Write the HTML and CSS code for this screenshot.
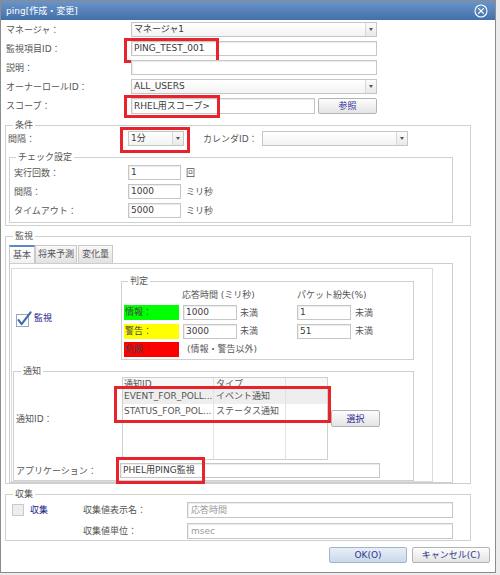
FILE: index.html
```html
<!DOCTYPE html>
<html lang="ja">
<head>
<meta charset="utf-8">
<title>ping[作成・変更]</title>
<link rel="stylesheet" href="styles.css">
</head>
<body>
<div class="dialog">
  <div class="titlebar">
    <span class="title">ping[作成・変更]</span>
    <svg class="close" width="14" height="14" viewBox="0 0 14 14"><circle cx="7" cy="7" r="6" fill="none" stroke="#fff" stroke-width="1.1"/><path d="M4.6 4.6l4.8 4.8M9.4 4.6l-4.8 4.8" stroke="#fff" stroke-width="1.3" stroke-linecap="round"/></svg>
  </div>
  <div class="content">
    <div class="row"><span class="lbl w125">マネージャ：</span><div class="select w246"><span class="val">マネージャ1</span><span class="arr"></span></div></div>
    <div class="row"><span class="lbl w125">監視項目ID：</span><div class="input w246">PING_TEST_001<span class="hl hl-id"></span></div></div>
    <div class="row"><span class="lbl w125">説明：</span><div class="input w246"></div></div>
    <div class="row"><span class="lbl w125">オーナーロールID：</span><div class="select w246"><span class="val">ALL_USERS</span><span class="arr"></span></div></div>
    <div class="row row5"><span class="lbl w125">スコープ：</span><div class="input w184 h16">RHEL用スコープ&gt;<span class="hl hl-scope"></span></div><span class="btn ref">参照</span></div>

    <fieldset class="grp g-cond">
      <legend>条件</legend>
      <div class="crow">
        <span class="lbl w120">間隔：</span>
        <div class="select w56"><span class="val">1分</span><span class="arr"></span><span class="hl hl-int"></span></div>
        <span class="lbl cal">カレンダID：</span>
        <div class="select w146"><span class="val"></span><span class="arr"></span></div>
      </div>
      <fieldset class="grp g-check">
        <legend>チェック設定</legend>
        <div class="krow"><span class="lbl w114">実行回数：</span><div class="input w53">1</div><span class="unit">回</span></div>
        <div class="krow"><span class="lbl w114">間隔：</span><div class="input w53">1000</div><span class="unit">ミリ秒</span></div>
        <div class="krow"><span class="lbl w114">タイムアウト：</span><div class="input w53">5000</div><span class="unit">ミリ秒</span></div>
      </fieldset>
    </fieldset>

    <fieldset class="grp g-mon">
      <legend>監視</legend>
      <div class="tabs">
        <span class="tab on t1">基本</span><span class="tab t2">将来予測</span><span class="tab t3">変化量</span>
      </div>
      <div class="tabpanel">
        <div class="pane">
          <div class="judge-row">
            <div class="chk-col">
              <svg class="chk" width="16" height="17" viewBox="0 0 16 17"><rect x="0.5" y="4.5" width="12" height="12" fill="#fff" stroke="#9aa8bb"/><path d="M2.6 10.2 L5.6 14.2 L14.6 2.4" fill="none" stroke="#3f6ca6" stroke-width="2.1" stroke-linecap="round" stroke-linejoin="round"/></svg>
              <span class="blue">監視</span>
            </div>
            <fieldset class="grp g-judge">
              <legend>判定</legend>
              <div class="jhead"><span class="jh1">応答時間 (ミリ秒)</span><span>パケット紛失(%)</span></div>
              <div class="jrow r1"><span class="clr green">情報：</span><div class="input w54 ml4">1000</div><span class="unit u1">未満</span><div class="input w54">1</div><span class="unit u2">未満</span></div>
              <div class="jrow r2"><span class="clr yellow">警告：</span><div class="input w54 ml4">3000</div><span class="unit u1">未満</span><div class="input w54">51</div><span class="unit u2">未満</span></div>
              <div class="jrow r3"><span class="clr red">危険：</span><span class="other">(情報・警告以外)</span></div>
            </fieldset>
          </div>
          <fieldset class="grp g-notify">
            <legend>通知</legend>
            <div class="nrow">
              <span class="lbl w106">通知ID：</span>
              <div class="tbl">
                <div class="tr thead"><span class="c1">通知ID</span><span class="c2">タイプ</span><span class="c3"></span></div>
                <div class="tr tr1"><span class="c1">EVENT_FOR_POLL...</span><span class="c2">イベント通知</span><span class="c3"></span></div>
                <div class="tr tr2"><span class="c1">STATUS_FOR_POL...</span><span class="c2">ステータス通知</span><span class="c3"></span></div>
                <div class="tr tfill"><span class="c1"></span><span class="c2"></span><span class="c3"></span></div>
                <span class="hl hl-tbl"></span>
              </div>
              <span class="btn sel">選択</span>
            </div>
            <div class="arow"><span class="lbl w104">アプリケーション：</span><div class="input w260">PHEL用PING監視<span class="hl hl-app"></span></div></div>
          </fieldset>
        </div>
      </div>
    </fieldset>

    <fieldset class="grp g-collect">
      <legend>収集</legend>
      <div class="colrow1">
        <span class="cbox"></span>
        <span class="blue cl">収集</span>
        <span class="lbl w104">収集値表示名：</span>
        <div class="input w266 h16 gray">応答時間</div>
      </div>
      <div class="colrow2">
        <span class="lbl w104">収集値単位：</span>
        <div class="input w266 h16 gray">msec</div>
      </div>
    </fieldset>

    <div class="btns">
      <span class="btn okb">OK(O)</span>
      <span class="btn cancel">キャンセル(C)</span>
    </div>
  </div>
</div>
</body>
</html>
```

FILE: styles.css
```css
* { box-sizing: border-box; }
html, body { margin: 0; padding: 0; }
body {
  width: 500px;
  height: 575px;
  overflow: hidden;
  background: #ececec;
  font-family: "DejaVu Sans", "Noto Sans CJK JP", sans-serif;
  font-size: 9px;
  color: #555;
}
.dialog {
  width: 496px;
  height: 573px;
  background: #fff;
  border: 1px solid #8c8c8c;
  display: flex;
  flex-direction: column;
}
.titlebar {
  height: 19px;
  flex: none;
  background: linear-gradient(#6a94c9, #4470aa);
  display: flex;
  align-items: center;
  justify-content: space-between;
  padding: 0 7px 0 5px;
}
.title { color: #fff; font-size: 9px; line-height: 12px; }
.close { display: block; }

.content {
  padding-left: 4px;
  display: flex;
  flex-direction: column;
  align-items: flex-start;
}
.row { height: 19px; display: flex; align-items: center; padding-left: 1px; flex: none; }
.row5 { height: 20px; }
.lbl { flex: none; white-space: nowrap; line-height: 12px; color: #555; }
.w125 { width: 125px; }
.w120 { width: 120px; }
.w114 { width: 114px; }
.w106 { width: 106px; }
.w104 { width: 104px; }

.input, .select {
  flex: none;
  height: 15px;
  border: 1px solid #c6c6c6;
  background: #fff;
  line-height: 13px;
  padding-left: 2px;
  color: #3a3a3a;
  white-space: nowrap;
  position: relative;
  box-shadow: inset 1px 1px 1px #ececec;
}
.h16 { height: 16px; line-height: 14px; }
.gray { color: #9a9a9a; padding-left: 3px; }
.select {
  display: flex;
  padding-left: 0;
  background: linear-gradient(#ffffff, #f3f3f3);
  box-shadow: none;
}
.select .val { flex: 1; padding-left: 2px; overflow: hidden; }
.select .arr {
  width: 11px;
  flex: none;
  border-left: 1px solid #d8d8d8;
  background: linear-gradient(#fbfbfb, #e9e9e9);
  display: flex;
  align-items: center;
  justify-content: center;
}
.select .arr::after {
  content: "";
  width: 0;
  height: 0;
  border-left: 2.5px solid transparent;
  border-right: 2.5px solid transparent;
  border-top: 3px solid #555;
}
.w246 { width: 246px; }
.w184 { width: 184px; }
.w56 { width: 56px; }
.w146 { width: 146px; }
.w53 { width: 53px; }
.w54 { width: 54px; }
.w260 { width: 260px; }
.w266 { width: 266px; }
.ml4 { margin-left: 4px; }

.btn {
  flex: none;
  display: flex;
  align-items: center;
  justify-content: center;
  border: 1px solid #b4b4b4;
  border-radius: 2px;
  background: linear-gradient(#fdfdfd, #e4e4e4);
  color: #2d2d96;
  line-height: 12px;
  white-space: nowrap;
}
.ref { width: 59px; height: 16px; margin-left: 3px; }
.sel { width: 49px; height: 17px; margin-left: 3px; }

.hl {
  position: absolute;
  border: 3px solid #e8232b;
  pointer-events: none;
}
.hl-id { left: -8px; top: -4px; width: 95px; height: 25px; }
.hl-scope { left: -8px; top: -4px; width: 96px; height: 23px; }
.hl-int { left: -9px; top: -5px; width: 70px; height: 26px; }
.hl-tbl { left: -9px; top: 8px; width: 217px; height: 37px; }
.hl-app { left: -5px; top: -7px; width: 89px; height: 27px; }

fieldset.grp {
  margin: 0;
  padding: 0;
  border: 1px solid #d0d0d0;
  min-width: 0;
  flex: none;
}
legend {
  padding: 0 2px;
  line-height: 10px;
  font-size: 9px;
  color: #555;
}

.g-cond { width: 466px; margin-top: 4px !important; padding: 0 0 2px 2px !important; }
.g-cond > legend { margin-left: 5px; }
.crow { height: 17px; display: flex; align-items: center; }
.cal { margin-left: 19px; width: 59px; }

.g-check { width: 444px; margin: 5px 0 0 1px !important; padding: 1px 0 2px 4px !important; }
.g-check > legend { margin-left: 2px; }
.krow { height: 19px; display: flex; align-items: center; }
.unit { flex: none; line-height: 12px; margin-left: 5px; color: #555; white-space: nowrap; }

.g-mon { width: 466px; margin-top: 5px !important; padding: 4px 0 0 3px !important; }
.g-mon > legend { margin-left: 4px; }
.tabs { display: flex; height: 18px; }
.tab {
  flex: none;
  height: 18px;
  border: 1px solid #c9c9c9;
  border-bottom: 0;
  background: linear-gradient(#f8f8f8, #e2e2e2);
  text-align: center;
  line-height: 17px;
  color: #555;
}
.tab.on {
  background: linear-gradient(#ffffff, #f2f2f2);
  border-top: 2px solid #5c89c3;
  line-height: 16px;
}
.t1 { width: 26px; }
.t2 { width: 42px; }
.t3 { width: 35px; margin-left: 1px; }
.tabpanel { width: 444px; border: 1px solid #cdcdcd; padding: 4px 0 0 1px; }
.pane { width: 422px; border: 1px solid #dcdcdc; }

.judge-row { display: flex; align-items: center; margin-top: 7px; }
.chk-col { width: 109px; flex: none; display: flex; align-items: center; padding-left: 4px; }
.chk { display: block; flex: none; }
.blue { color: #20208a; line-height: 12px; white-space: nowrap; }
.chk-col .blue { margin-left: 2px; }

.g-judge { width: 293px; padding: 0 0 1px 1px !important; }
.g-judge > legend { margin-left: 5px; }
.jhead { height: 17px; display: flex; align-items: center; padding-left: 59px; line-height: 12px; color: #555; }
.jh1 { width: 115px; flex: none; white-space: nowrap; }
.jrow { display: flex; align-items: center; }
.r1 { height: 19px; }
.r2 { height: 18px; }
.r3 { height: 18px; }
.clr { flex: none; width: 55px; height: 15px; line-height: 15px; margin-left: 1px; padding-left: 1px; color: #444; }
.green { background: #00ff00; }
.yellow { background: #ffff00; }
.red { background: #ff0000; }
.u1 { width: 57px; margin-left: 3px; }
.u2 { margin-left: 4px; }
.other { margin-left: 8px; line-height: 12px; color: #555; white-space: nowrap; }

.g-notify { width: 401px; margin: 6px 0 0 1px !important; padding: 0 0 0 2px !important; }
.g-notify > legend { margin-left: 5px; }
.nrow { display: flex; align-items: center; margin-top: 1px; }
.tbl {
  flex: none;
  width: 206px;
  height: 83px;
  border: 1px solid #cfcfcf;
  display: flex;
  flex-direction: column;
  position: relative;
}
.tr { display: flex; flex: none; }
.tr span { border-right: 1px solid #e2e2e2; padding-left: 1px; white-space: nowrap; overflow: hidden; color: #555; }
.tr .c2 { padding-left: 2px; }
.tr .c1 { width: 91px; flex: none; }
.tr .c2 { width: 72px; flex: none; }
.tr .c3 { flex: 1; border-right: 0; }
.thead { height: 10px; line-height: 13px; background: #f8f8f8; overflow: hidden; }
.tr1 { height: 16px; line-height: 16px; background: #eeeeee; }
.tr2 { height: 15px; line-height: 15px; }
.tfill { flex: 1; }
.arow { height: 19px; margin-top: 1px; display: flex; align-items: center; }

.g-collect { width: 466px; margin-top: 5px !important; padding: 0 0 1px 0 !important; }
.g-collect > legend { margin-left: 7px; }
.colrow1 { margin-top: 3px; height: 16px; display: flex; align-items: center; }
.cbox { flex: none; width: 12px; height: 12px; margin-left: 6px; background: #eeeeee; border: 1px solid #c9c9c9; }
.cl { flex: none; width: 53px; margin-left: 6px; }
.colrow2 { margin-top: 5px; height: 16px; display: flex; align-items: center; padding-left: 77px; }

.btns {
  align-self: stretch;
  margin-top: 6px;
  display: flex;
  justify-content: flex-end;
  gap: 5px;
  padding-right: 5px;
}
.okb, .cancel { width: 78px; height: 16px; color: #2f3590; }
.okb { background: linear-gradient(#e8eff8, #c9d8ea); border-color: #a3b5cb; }
```
